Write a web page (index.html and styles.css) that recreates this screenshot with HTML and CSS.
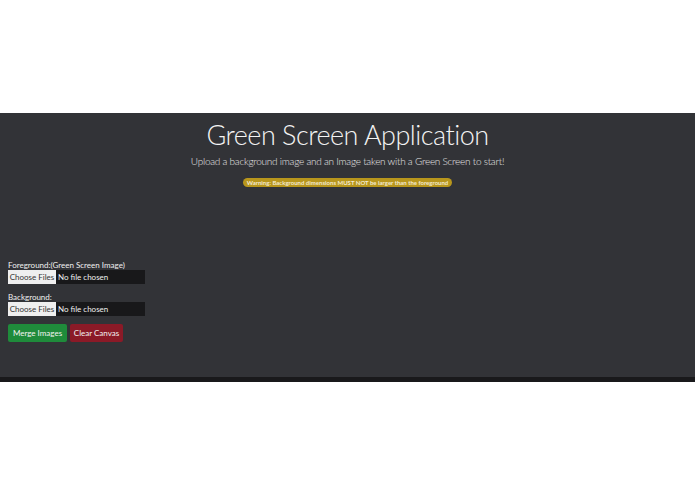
FILE: index.html
```html
<!DOCTYPE html>
<html>
    <head>
        <title>Green Screen Application</title>
        <link rel="stylesheet" href="styles.css">
    </head>
<body>
    <div class="top-space"></div>
    <div class="app">
        <div class="header">
            <h1>Green Screen Application</h1>
            <p class="lead">Upload a background image and an Image taken with a Green Screen to start!</p>
            <span class="badge">Warning: Background dimensions MUST NOT be larger than the foreground</span>
        </div>

        <div class="canvas-area"></div>

        <div class="controls">
            <label class="field-label" for="fgInput">Foreground:(Green Screen Image)</label>
            <input type="file" id="fgInput" class="file-input" multiple>

            <label class="field-label" for="bgInput">Background:</label>
            <input type="file" id="bgInput" class="file-input" multiple>

            <div class="actions">
                <button class="btn btn-green" id="merge">Merge Images</button>
                <button class="btn btn-red" id="clear">Clear Canvas</button>
            </div>
        </div>
    </div>
    <div class="footer-bar"></div>
</body>
</html>
```

FILE: styles.css
```css
body {
    margin: 0;
    padding: 0;
    background: #ffffff;
    font-family: Lato, "Noto Sans", sans-serif;
    color: #ffffff;
}

.top-space {
    height: 113px;
}

.app {
    background: #323337;
    height: 264px;
    display: flex;
    flex-direction: column;
}

.header {
    display: flex;
    flex-direction: column;
    align-items: center;
    padding-top: 5px;
}

h1 {
    margin: 0;
    font-size: 27px;
    font-weight: 300;
    letter-spacing: -0.5px;
    line-height: 34px;
    color: #f4f4f4;
}

.lead {
    margin: 2px 0 0 0;
    font-size: 10px;
    font-weight: 300;
    letter-spacing: -0.25px;
    line-height: 14px;
    color: #e6e6e6;
}

.badge {
    margin-top: 10px;
    background: #b8961c;
    color: #f2ead0;
    font-size: 6px;
    font-weight: 700;
    line-height: 9px;
    padding: 0 4px;
    border-radius: 5px;
}

.canvas-area {
    height: 73px;
}

.controls {
    display: flex;
    flex-direction: column;
    align-items: flex-start;
    padding-left: 8px;
}

.field-label {
    font-size: 8px;
    line-height: 10px;
    color: #f0f0f0;
}

.file-input {
    width: 137px;
    height: 14px;
    background: #18181a;
    color: #f0f0f0;
    font-family: Lato, "Noto Sans", sans-serif;
    font-size: 8px;
    margin: 0 0 8px 0;
    padding: 0;
    line-height: 14px;
}

.file-input::file-selector-button {
    height: 14px;
    width: 48px;
    margin: 0 2px 0 0;
    padding: 0;
    border: none;
    background: #efefef;
    color: #333;
    font-family: Lato, "Noto Sans", sans-serif;
    font-size: 8px;
}

.actions {
    display: flex;
    gap: 3px;
}

.btn {
    height: 18px;
    border: none;
    border-radius: 2px;
    color: #f2f2f2;
    font-family: Lato, "Noto Sans", sans-serif;
    font-size: 8px;
    padding: 0;
    white-space: nowrap;
    cursor: pointer;
}

.btn-green {
    background: #1f8b3b;
    width: 59px;
}

.btn-red {
    background: #8b1a27;
    width: 53px;
}

.footer-bar {
    height: 5px;
    background: #19191b;
}
```
